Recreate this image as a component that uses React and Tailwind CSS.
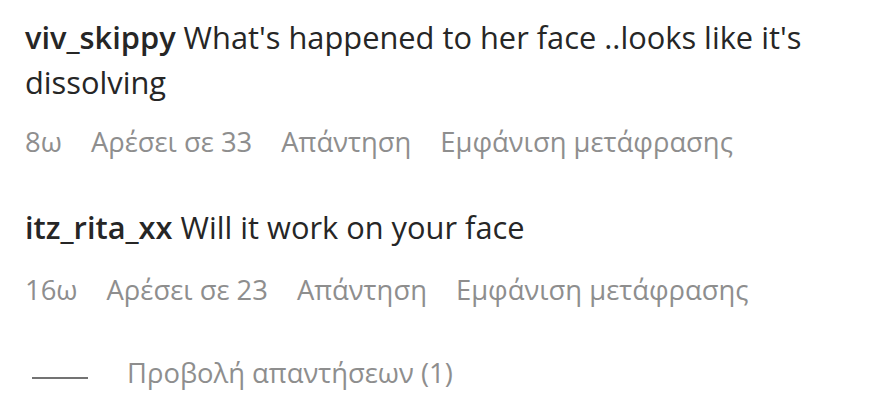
export default function App() {
  return (
    <div className="w-[880px] h-[415px] bg-white text-[#262626] pl-[25px] pt-[15px] font-['Open_Sans','Noto_Sans',sans-serif]">
      <div className="text-[30.8px] leading-[45px] w-[820px]">
        <span className="font-semibold">viv_skippy</span> What's happened to her face ..looks like it's dissolving
      </div>
      <div className="flex gap-[29px] text-[27.4px] leading-[36px] text-[#8e8e8e] mt-[19px]">
        <span>8ω</span>
        <span>Αρέσει σε 33</span>
        <span>Απάντηση</span>
        <span>Εμφάνιση μετάφρασης</span>
      </div>
      <div className="text-[30.8px] leading-[45px] mt-[45px]">
        <span className="font-semibold">itz_rita_xx</span> Will it work on your face
      </div>
      <div className="flex gap-[29px] text-[27.4px] leading-[36px] text-[#8e8e8e] mt-[22px]">
        <span>16ω</span>
        <span>Αρέσει σε 23</span>
        <span>Απάντηση</span>
        <span>Εμφάνιση μετάφρασης</span>
      </div>
      <div className="flex items-start mt-[47px]">
        <div className="w-[56px] h-[2px] bg-[#737373] ml-[7px] mr-[39px] mt-[22px]" />
        <span className="text-[27.4px] leading-[36px] text-[#8e8e8e]">Προβολή απαντήσεων (1)</span>
      </div>
    </div>
  );
}
